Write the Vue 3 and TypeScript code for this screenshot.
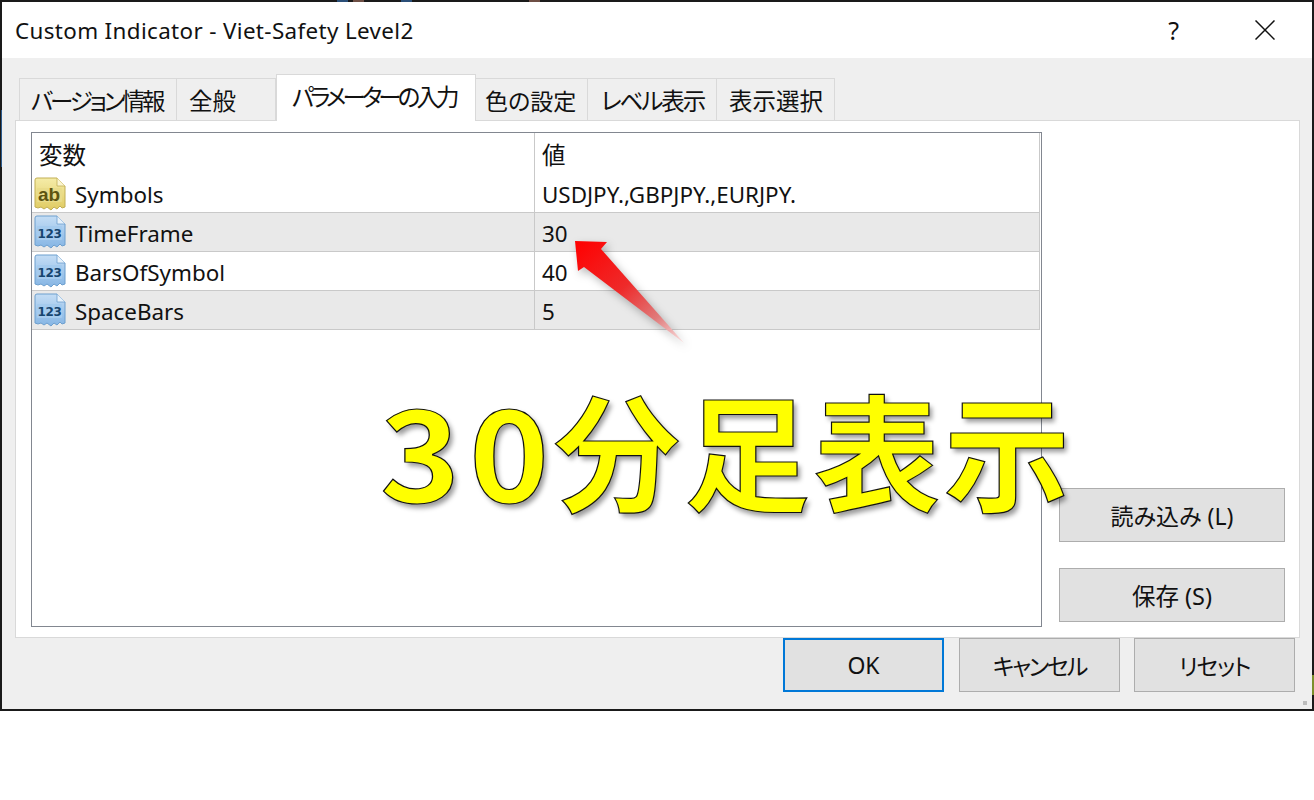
<script setup lang="ts">
const rows = [
  { name: 'Symbols', value: 'USDJPY.,GBPJPY.,EURJPY.', kind: 'ab' },
  { name: 'TimeFrame', value: '30', kind: '123' },
  { name: 'BarsOfSymbol', value: '40', kind: '123' },
  { name: 'SpaceBars', value: '5', kind: '123' },
];
</script>

<template>
  <div class="page">
    <div class="window">
      <i class="edge e1"></i><i class="edge e2"></i><i class="edge e3"></i><i class="edge e4"></i>
      <i class="edge e5"></i><i class="edge e6"></i>

      <header class="titlebar">
        <span class="title">Custom Indicator - Viet-Safety Level2</span>
        <span class="help">?</span>
        <svg class="close" width="20" height="20" viewBox="0 0 20 20">
          <path d="M0.5 0.5 L19.5 19.5 M19.5 0.5 L0.5 19.5" stroke="#111" stroke-width="1.5" fill="none" />
        </svg>
      </header>

      <div class="tabs">
        <div class="tab t1">バージョン情報</div>
        <div class="tab t2">全般</div>
        <div class="tab active">パラメーターの入力</div>
        <div class="tab t3">色の設定</div>
        <div class="tab t4">レベル表示</div>
        <div class="tab t5">表示選択</div>
      </div>

      <section class="panel">
        <div class="grid">
          <div class="row head">
            <div class="cell name">変数</div>
            <div class="cell val">値</div>
          </div>
          <div v-for="r in rows" :key="r.name" class="row item">
            <div class="cell name">
              <svg class="icon" width="34" height="34" viewBox="0 0 34 34">
                <defs>
                  <linearGradient id="gy" x1="0" y1="0" x2="0" y2="1">
                    <stop offset="0" stop-color="#f5eca8" />
                    <stop offset="1" stop-color="#e0cb62" />
                  </linearGradient>
                  <linearGradient id="gb" x1="0" y1="0" x2="0" y2="1">
                    <stop offset="0" stop-color="#c4ddf5" />
                    <stop offset="1" stop-color="#85b5e4" />
                  </linearGradient>
                </defs>
                <path
                  d="M2 3 Q2 1 4 1 L24 1 L32 9 L32 30 L29 31 L27 29 L24 32 L21 30 L18 33 L14 30 L11 32 L8 30 L5 31 L2 30 Z"
                  :fill="r.kind === 'ab' ? 'url(#gy)' : 'url(#gb)'"
                  :stroke="r.kind === 'ab' ? '#c2af55' : '#6d9fce'"
                  stroke-width="1"
                />
                <path d="M24 1 L24 9 L32 9" :fill="r.kind === 'ab' ? '#fbf5cf' : '#e6f1fb'" :stroke="r.kind === 'ab' ? '#c2af55' : '#6d9fce'" stroke-width="0.8" />
                <rect x="4" y="11" width="25" height="14" rx="1" :fill="r.kind === 'ab' ? '#e9dc8a' : '#a5cbee'" />
                <text v-if="r.kind === 'ab'" x="16" y="24" text-anchor="middle" class="ictext" font-size="19" fill="#5e5410">ab</text>
                <text v-else x="16.5" y="23" text-anchor="middle" class="ictext num" fill="#17456f">123</text>
              </svg>
              <span>{{ r.name }}</span>
            </div>
            <div class="cell val">{{ r.value }}</div>
          </div>
        </div>
        <aside class="side">
          <button class="btn side-btn">読み込み (L)</button>
          <button class="btn side-btn save">保存 (S)</button>
        </aside>
      </section>

      <footer class="footer">
        <button class="btn foot-btn ok">OK</button>
        <button class="btn foot-btn cancel">キャンセル</button>
        <button class="btn foot-btn reset">リセット</button>
      </footer>

      <div class="grip"></div>

      <svg class="arrow" width="130" height="120" viewBox="0 0 130 120">
        <defs>
          <linearGradient id="ar" x1="0" y1="0" x2="1" y2="1">
            <stop offset="0" stop-color="#ff0000" />
            <stop offset="0.45" stop-color="#ee2a2a" />
            <stop offset="0.75" stop-color="#e07a7a" />
            <stop offset="1" stop-color="#fbe3e3" />
          </linearGradient>
        </defs>
        <polygon points="4,3 36,4 30,11 113,105 13,29 7,33" fill="url(#ar)" />
      </svg>

      <div class="banner"><span class="digit">3</span><span class="digit">0</span><span class="kanji">分足表示</span></div>
    </div>
  </div>
</template>

<style scoped>
.page {
  width: 1314px;
  height: 800px;
  background: #fff;
  overflow: hidden;
  font-family: "Noto Sans", "Noto Sans CJK JP", sans-serif;
  color: #111;
}
.window {
  position: relative;
  width: 1314px;
  height: 711px;
  box-sizing: border-box;
  border: 2px solid #1a1a1a;
  background: #efefef;
}
.edge {
  position: absolute;
  display: block;
}
.e1 { top: -2px; left: 335px; width: 11px; height: 2px; background: #2b4f78; }
.e2 { top: -2px; left: 351px; width: 11px; height: 2px; background: #6e4f45; }
.e3 { top: -2px; left: 399px; width: 11px; height: 2px; background: #2b4f78; }
.e4 { top: -2px; left: 527px; width: 11px; height: 2px; background: #6e4f45; }
.e5 { left: -1px; top: 108px; width: 1px; height: 57px; background: #2b5a8c; }
.e6 { right: -2px; top: 673px; width: 2px; height: 20px; background: #7c8f2c; }
.titlebar {
  display: flex;
  align-items: center;
  height: 56px;
  background: #fff;
  padding-left: 13px;
}
.title {
  font-size: 22.4px;
  letter-spacing: 0.36px;
  flex: 1;
}
.help {
  font-size: 25px;
  margin-right: 76px;
}
.close {
  margin-right: 37px;
}
.tabs {
  display: flex;
  align-items: flex-end;
  height: 47px;
  margin-top: 16px;
  padding-left: 17px;
  position: relative;
  z-index: 1;
  font-feature-settings: "palt";
}
.tab {
  box-sizing: border-box;
  height: 43px;
  border: 1px solid #d9d9d9;
  border-bottom: none;
  border-left: none;
  display: flex;
  align-items: center;
  padding-left: 12px;
  font-size: 23.5px;
  white-space: nowrap;
}
.t1 {
  width: 158px;
  border-left: 1px solid #d9d9d9;
  padding-left: 11px;
  letter-spacing: -3.1px;
}
.t2 { width: 99px; }
.t3 { width: 112px; padding-left: 9px; font-size: 23px; }
.t4 { width: 129px; letter-spacing: -2.1px; padding-left: 13px; }
.t5 { width: 118px; }
.active {
  width: 200px;
  height: 47px;
  background: #fff;
  border-left: 1px solid #d9d9d9;
  padding-left: 15px;
  padding-bottom: 4px;
  letter-spacing: -3.9px;
}
.panel {
  display: flex;
  box-sizing: border-box;
  width: 1285px;
  height: 518px;
  margin-left: 13px;
  margin-top: -1px;
  padding: 11px 15px;
  background: #fff;
  border: 1px solid #d9d9d9;
}
.grid {
  box-sizing: border-box;
  width: 1011px;
  height: 495px;
  border: 1px solid #828790;
  padding-right: 1px;
  flex: none;
  font-size: 22.4px;
}
.row {
  display: grid;
  grid-template-columns: 503px 505px;
}
.head {
  height: 42px;
  font-size: 23.5px;
}
.item {
  box-sizing: border-box;
  height: 39px;
  border-bottom: 1px solid #c9c9c9;
}
.head + .item { height: 38px; }
.item:nth-child(odd) {
  background: #e9e9e9;
}
.cell {
  display: flex;
  align-items: center;
  box-sizing: border-box;
  white-space: nowrap;
}
.item .cell {
  padding-top: 2px;
}
.head + .item .cell {
  padding-top: 1px;
}
.name {
  border-right: 1px solid #c9c9c9;
  padding-left: 2px;
}
.head .name {
  padding-left: 7px;
}
.val {
  padding-left: 7px;
  border-right: 1px solid #c9c9c9;
}
.icon {
  flex: none;
  margin-left: -1px;
  margin-right: 8px;
  margin-top: -2px;
}
.head + .item .icon {
  margin-top: -1px;
}
.ictext {
  font-family: "Liberation Sans", sans-serif;
  font-weight: 700;
}
.num {
  font-family: "DejaVu Sans", sans-serif;
  font-size: 12px;
  letter-spacing: -0.4px;
}
.side {
  display: flex;
  flex-direction: column;
  justify-content: flex-end;
  gap: 26px;
  margin-left: 17px;
  padding-bottom: 4px;
}
.btn {
  box-sizing: border-box;
  border: 1px solid #adadad;
  background: #e1e1e1;
  color: #111;
  font-family: "Noto Sans", "Noto Sans CJK JP", sans-serif;
  font-size: 23px;
  font-feature-settings: "palt";
  padding: 0;
}
.side-btn {
  width: 226px;
  height: 54px;
}
.save { font-size: 23.5px; }
.footer {
  display: flex;
  justify-content: flex-end;
  gap: 14px;
  padding-right: 17px;
}
.foot-btn {
  width: 161px;
  height: 54px;
}
.ok {
  border: 2px solid #0078d7;
  margin-right: 1px;
}
.cancel { letter-spacing: -2.2px; }
.reset { letter-spacing: -1.3px; }
.grip {
  position: absolute;
  right: 5px;
  bottom: 4px;
  width: 4px;
  height: 4px;
  background: #bdbdbd;
}
.arrow {
  position: absolute;
  left: 569px;
  top: 236px;
  filter: drop-shadow(3px 4px 4px rgba(0, 0, 0, 0.28));
  overflow: visible;
}
.banner {
  position: absolute;
  left: 378px;
  top: 360px;
  display: flex;
  font-family: "Noto Sans CJK JP", sans-serif;
  font-size: 126px;
  line-height: 170px;
  font-weight: 700;
  color: #ffff00;
  letter-spacing: 4px;
  white-space: nowrap;
  -webkit-text-stroke: 1.2px #111;
  text-shadow: 3px 4px 5px rgba(0, 0, 0, 0.4);
}
.digit {
  display: block;
  width: 89px;
  transform: scaleX(1.08);
  transform-origin: left center;
  letter-spacing: 0;
}
.kanji {
  display: block;
  margin-left: -4px;
}
</style>

<style>
html, body { margin: 0; padding: 0; background: #fff; }
</style>
